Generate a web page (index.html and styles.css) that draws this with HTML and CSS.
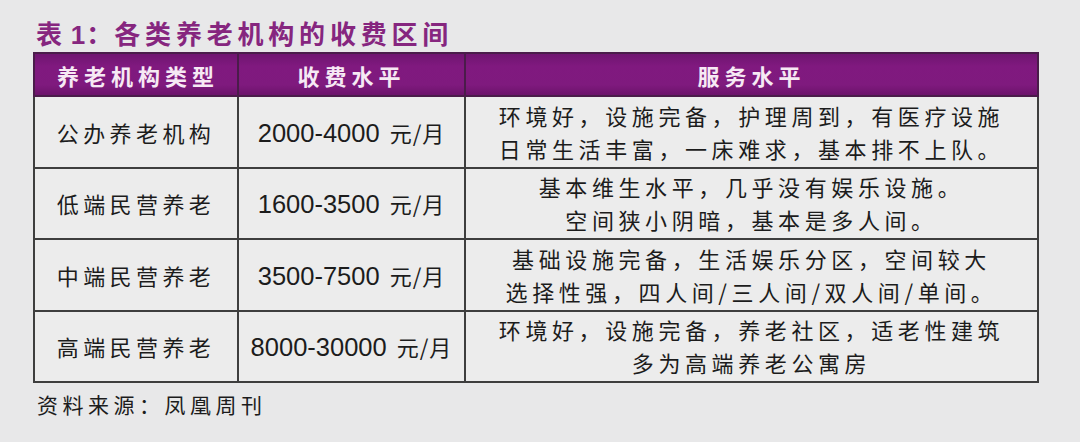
FILE: index.html
```html
<!DOCTYPE html>
<html lang="zh-CN">
<head>
<meta charset="utf-8">
<link rel="stylesheet" href="styles.css">
</head>
<body>
<div class="page">
  <h1 class="title"><span class="t-lead">表</span><span class="t-num">1</span><span class="t-colon">：</span>各类养老机构的收费区间</h1>
  <table class="fees">
    <colgroup>
      <col class="c1">
      <col class="c2">
      <col class="c3">
    </colgroup>
    <thead>
      <tr class="head">
        <th>养老机构类型</th>
        <th>收费水平</th>
        <th>服务水平</th>
      </tr>
    </thead>
    <tbody>
      <tr>
        <td class="type">公办养老机构</td>
        <td class="price"><span class="num">2000-4000</span><span class="unit">元/月</span></td>
        <td class="svc">环境好，设施完备，护理周到，有医疗设施<br>日常生活丰富，一床难求，基本排不上队。</td>
      </tr>
      <tr>
        <td class="type">低端民营养老</td>
        <td class="price"><span class="num">1600-3500</span><span class="unit">元/月</span></td>
        <td class="svc">基本维生水平，几乎没有娱乐设施。<br>空间狭小阴暗，基本是多人间。</td>
      </tr>
      <tr>
        <td class="type">中端民营养老</td>
        <td class="price"><span class="num">3500-7500</span><span class="unit">元/月</span></td>
        <td class="svc">基础设施完备，生活娱乐分区，空间较大<br>选择性强，四人间/三人间/双人间/单间。</td>
      </tr>
      <tr>
        <td class="type">高端民营养老</td>
        <td class="price"><span class="num">8000-30000</span><span class="unit">元/月</span></td>
        <td class="svc">环境好，设施完备，养老社区，适老性建筑<br>多为高端养老公寓房</td>
      </tr>
    </tbody>
  </table>
  <p class="source">资料来源：凤凰周刊</p>
</div>
</body>
</html>
```
FILE: styles.css
```css
html, body {
  margin: 0;
  padding: 0;
  background: #e8e8e9;
}

.page {
  width: 1080px;
  height: 442px;
  padding: 20px 0 0 33px;
  box-sizing: border-box;
  font-family: "Noto Sans CJK SC", "Liberation Sans", sans-serif;
  color: #1c1c1c;
}

.title {
  margin: 0 0 2px 3px;
  font-family: "Liberation Sans", "Noto Sans CJK SC", sans-serif;
  font-size: 26px;
  line-height: 30px;
  font-weight: 700;
  letter-spacing: 4.8px;
  color: #86267f;
}

.t-lead {
  margin-right: 4px;
}

.t-num {
  letter-spacing: 1px;
}

.t-colon {
  letter-spacing: 2px;
}

.fees {
  width: 1004px;
  table-layout: fixed;
  border-collapse: collapse;
  background: #ececec;
  border: 2px solid #3a3a3a;
}

.c1 { width: 204px; }
.c2 { width: 227px; }
.c3 { width: 573px; }

.fees th,
.fees td {
  border: 2px solid #3e3e3e;
  padding: 0;
  text-align: center;
  vertical-align: middle;
}

.head th {
  height: 41px;
  background: linear-gradient(to bottom, #6f1570 0%, #80197f 30%, #7f1a7e 75%, #6c136b 100%);
  color: #f6e9f4;
  font-size: 22px;
  font-weight: 700;
  letter-spacing: 5px;
  border-color: #4a1c4a;
}

.head th:first-child {
  padding-left: 4px;
}

.fees tbody td {
  height: 69.5px;
}

.type {
  font-size: 22px;
  letter-spacing: 4.4px;
  padding-left: 4px;
}

.price {
  white-space: nowrap;
}

.num {
  font-family: "Liberation Sans", sans-serif;
  font-size: 25.5px;
}

.unit {
  margin-left: 10px;
  font-size: 22px;
  letter-spacing: 1px;
}

.svc {
  font-size: 22px;
  line-height: 33px;
  letter-spacing: 4.6px;
}

.source {
  margin: 8px 0 0 4px;
  font-size: 21px;
  line-height: 26px;
  letter-spacing: 4.5px;
  color: #1c1c1c;
}
```
